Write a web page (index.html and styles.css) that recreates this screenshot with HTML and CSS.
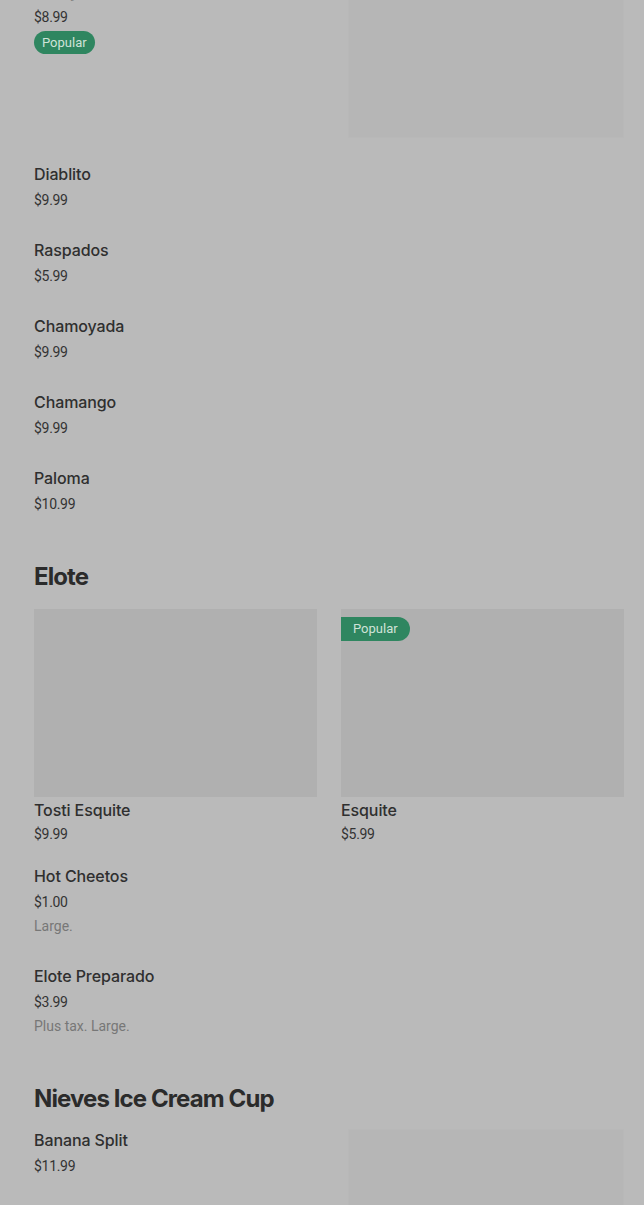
FILE: index.html
```html
<!DOCTYPE html>
<html lang="en">
<head>
<meta charset="utf-8">
<title>Menu</title>
<link rel="stylesheet" href="styles.css">
</head>
<body>
<main class="menu">
  <section class="section section--first">
    <ul class="list">
      <li class="item item--thumb item--first">
        <div class="info">
          <h3 class="name">Mangonada</h3>
          <p class="price">$8.99</p>
          <span class="badge">Popular</span>
        </div>
        <div class="thumb"></div>
      </li>
      <li class="item"><div class="info"><h3 class="name">Diablito</h3><p class="price">$9.99</p></div></li>
      <li class="item"><div class="info"><h3 class="name">Raspados</h3><p class="price">$5.99</p></div></li>
      <li class="item"><div class="info"><h3 class="name">Chamoyada</h3><p class="price">$9.99</p></div></li>
      <li class="item"><div class="info"><h3 class="name">Chamango</h3><p class="price">$9.99</p></div></li>
      <li class="item"><div class="info"><h3 class="name">Paloma</h3><p class="price">$10.99</p></div></li>
    </ul>
  </section>

  <section class="section">
    <h2 class="heading">Elote</h2>
    <div class="grid">
      <article class="card">
        <div class="card-img"></div>
        <h3 class="name">Tosti Esquite</h3>
        <p class="price">$9.99</p>
      </article>
      <article class="card">
        <div class="card-img"><span class="badge badge--flag">Popular</span></div>
        <h3 class="name">Esquite</h3>
        <p class="price">$5.99</p>
      </article>
    </div>
    <ul class="list">
      <li class="item"><div class="info"><h3 class="name">Hot Cheetos</h3><p class="price">$1.00</p><p class="desc">Large.</p></div></li>
      <li class="item"><div class="info"><h3 class="name">Elote Preparado</h3><p class="price">$3.99</p><p class="desc">Plus tax. Large.</p></div></li>
    </ul>
  </section>

  <section class="section">
    <h2 class="heading heading--tight">Nieves Ice Cream Cup</h2>
    <ul class="list">
      <li class="item item--thumb">
        <div class="info">
          <h3 class="name">Banana Split</h3>
          <p class="price">$11.99</p>
        </div>
        <div class="thumb"></div>
      </li>
    </ul>
  </section>
</main>
</body>
</html>
```
FILE: styles.css
```css
* { box-sizing: border-box; }
html, body { margin: 0; padding: 0; }
body {
  background: #bababa;
  color: #2e2e2e;
  font-family: Inter, "Noto Sans", sans-serif;
  width: 644px;
  height: 1205px;
  overflow: hidden;
}
.menu {
  padding: 0 20px 0 34px;
}
.section--first { margin-top: -20px; }
.list { list-style: none; margin: 0; padding: 0; }
.item {
  display: flex;
  justify-content: space-between;
  align-items: flex-start;
  padding: 6px 0 23px;
}
.item--thumb { padding: 0 0 23px; }
.item--first { padding-bottom: 19px; }
.info { display: flex; flex-direction: column; align-items: flex-start; }
.name {
  margin: 0;
  font-size: 16px;
  line-height: 22px;
  font-weight: 500;
  color: #2f2f2f;
  letter-spacing: -0.1px;
}
.price {
  margin: 5px 0 0;
  font-family: Roboto, "Liberation Sans", sans-serif;
  font-size: 14px;
  line-height: 20px;
  color: #333;
  letter-spacing: -0.3px;
}
.desc {
  margin: 4px 0 0;
  font-family: Roboto, "Liberation Sans", sans-serif;
  font-size: 14px;
  line-height: 20px;
  color: #777;
}
.badge {
  margin-top: 4px;
  display: inline-block;
  background: #2f8660;
  color: #cfe3d8;
  font-family: Roboto, "Liberation Sans", sans-serif;
  font-size: 13px;
  line-height: 23px;
  padding: 0 8px;
  border-radius: 12px;
}
.thumb {
  width: 276px;
  height: 158px;
  background: #b6b6b6;
  border: 1px solid #b8b8b8;
}
.heading {
  margin: 24px 0 16px;
  font-size: 24px;
  line-height: 32px;
  font-weight: 700;
  letter-spacing: -0.9px;
  color: #2b2b2b;
}
.heading--tight { margin-bottom: 14px; }
.grid {
  display: grid;
  grid-template-columns: 1fr 1fr;
  column-gap: 24px;
  margin-bottom: 15px;
}
.card-img {
  position: relative;
  height: 188px;
  background: #b0b0b0;
}
.card .name { margin-top: 2px; }
.card .price { margin-top: 3px; }
.badge--flag {
  position: absolute;
  left: 0;
  top: 8px;
  margin: 0;
  border-radius: 0 12px 12px 0;
  padding: 0 12px;
  line-height: 24px;
}
```
